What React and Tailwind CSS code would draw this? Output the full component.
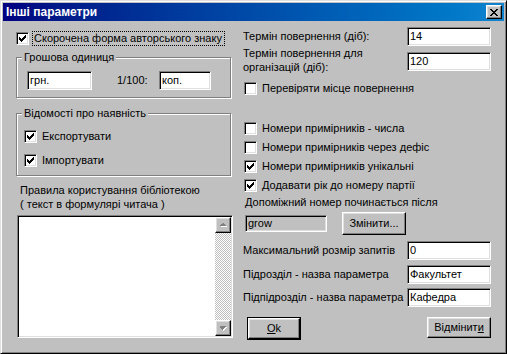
import React from "react";

const sunken =
  "border border-t-[#808080] border-l-[#808080] border-b-white border-r-white shadow-[inset_1px_1px_0_#000,inset_-1px_-1px_0_#dfdfdf]";
const raised =
  "border border-t-white border-l-white border-b-black border-r-black shadow-[inset_-1px_-1px_0_#808080,inset_1px_1px_0_#dfdfdf] bg-[#c0c0c0]";

function Check({ checked }) {
  return (
    <div className={`w-[13px] h-[13px] shrink-0 bg-white ${sunken}`}>
      {checked && (
        <svg width="11" height="11" viewBox="0 0 11 11" className="block">
          <path
            d="M8 2h1v1h-1z M7 3h2v1h-2z M2 4h1v1h-1z M6 4h3v1h-3z M2 5h2v1h-2z M5 5h3v1h-3z M2 6h5v1h-5z M3 7h3v1h-3z M4 8h1v1h-1z"
            fill="#000"
          />
        </svg>
      )}
    </div>
  );
}

function Field({ value, className = "", gray }) {
  return (
    <div
      className={`${sunken} ${gray ? "bg-[#c0c0c0]" : "bg-white"} flex items-center pl-[2px] shrink-0 overflow-hidden whitespace-nowrap ${className}`}
    >
      {value}
    </div>
  );
}

function CbRow({ checked, label, className = "" }) {
  return (
    <div className={`flex items-center h-[13px] ml-[1px] ${className}`}>
      <Check checked={checked} />
      <span className="ml-[5px] whitespace-nowrap">{label}</span>
    </div>
  );
}

function Group({ title, className = "", children }) {
  return (
    <div
      className={`relative w-[215px] border border-[#808080] shadow-[inset_1px_1px_0_#fff,1px_1px_0_#fff] ${className}`}
    >
      <span className="absolute -top-[7px] left-[5px] px-[2px] bg-[#c0c0c0] leading-[13px] whitespace-nowrap">
        {title}
      </span>
      {children}
    </div>
  );
}

function Arrow({ up }) {
  return (
    <div className={`w-[16px] h-[16px] ${raised} flex items-center justify-center`}>
      <svg width="7" height="5" viewBox="0 0 7 5" className="block">
        {up ? (
          <>
            <path d="M4 1h1v1h1v1h1v1h-6v-1h1v-1h1z" fill="#fff" />
            <path d="M3 0h1v1h1v1h1v1h-6v-1h1v-1h1z" fill="#808080" />
          </>
        ) : (
          <>
            <path d="M1 1h6v1h-1v1h-1v1h-1v1h-1v-1h-1v-1h-1z" fill="#fff" />
            <path d="M0 0h6v1h-1v1h-1v1h-1v1h-1v-1h-1v-1h-1z" fill="#808080" />
          </>
        )}
      </svg>
    </div>
  );
}

export default function App() {
  return (
    <div className="w-[507px] h-[354px] bg-[#c0c0c0] text-[11px] leading-[13px] text-black font-['Liberation_Sans',Arial,sans-serif]">
      <div className="w-full h-full border border-t-[#dfdfdf] border-l-[#dfdfdf] border-b-black border-r-black shadow-[inset_1px_1px_0_#fff,inset_-1px_-1px_0_#808080] p-[2px] flex flex-col">
        {/* Title bar */}
        <div className="h-[18px] shrink-0 bg-linear-to-r from-[#000080] to-[#1084d0] flex items-center justify-between pl-[3px] pr-[2px]">
          <span className="text-white font-bold text-[12px] leading-[14px]">Інші параметри</span>
          <div className={`w-[16px] h-[14px] ${raised} flex items-center justify-center`}>
            <svg width="8" height="7" viewBox="0 0 8 7" className="block">
              <path
                d="M0 0h2v1h1v1h2v-1h1v-1h2v1h-1v1h-1v1h-1v1h1v1h1v1h1v1h-2v-1h-1v-1h-2v1h-1v1h-2v-1h1v-1h1v-1h1v-1h-1v-1h-1v-1h-1z"
                fill="#000"
              />
            </svg>
          </div>
        </div>

        {/* Content */}
        <div className="flex flex-1">
          {/* Left column */}
          <div className="ml-[13px] w-[217px] flex flex-col">
            <div className="mt-[10px] h-[15px] flex items-center">
              <Check checked />
              <div className="ml-[3px] h-[15px] w-[193px] border border-dotted border-black flex items-center pl-[1px] whitespace-nowrap">
                Скорочена форма авторського знаку
              </div>
            </div>

            <Group title="Грошова одиниця" className="mt-[11px] h-[41px]">
              <div className="flex items-center pt-[13px] pl-[10px]">
                <Field value="грн." className="w-[65px] h-[19px]" />
                <span className="ml-[25px] w-[42px]">1/100:</span>
                <Field value="коп." className="w-[52px] h-[19px]" />
              </div>
            </Group>

            <Group title="Відомості про наявність" className="mt-[15px] h-[63px]">
              <div className="flex flex-col pt-[16px] pl-[6px]">
                <CbRow checked label="Експортувати" />
                <CbRow checked label="Імпортувати" className="mt-[11px]" />
              </div>
            </Group>

            <div className="mt-[7px] ml-[4px] leading-[14px] whitespace-nowrap">
              <div>Правила користування бібліотекою</div>
              <div>( текст в формулярі читача )</div>
            </div>

            <div className={`mt-[4px] ml-[1px] w-[216px] h-[123px] bg-white ${sunken} flex justify-end p-[1px]`}>
              <div className="w-[16px] h-full flex flex-col">
                <Arrow up />
                <div className="flex-1 bg-[image:repeating-conic-gradient(#fff_0_25%,#c0c0c0_0_50%)] bg-[length:2px_2px]" />
                <Arrow />
              </div>
            </div>
          </div>

          {/* Right column */}
          <div className="ml-[10px] w-[248px] flex flex-col">
            <div className="mt-[6px] h-[19px] flex items-center justify-between">
              <span className="whitespace-nowrap">Термін повернення (діб):</span>
              <Field value="14" className="w-[84px] h-[19px]" />
            </div>
            <div className="h-[28px] flex items-start justify-between">
              <div className="leading-[14px] whitespace-nowrap">
                <div>Термін повернення для</div>
                <div>організацій (діб):</div>
              </div>
              <Field value="120" className="mt-[6px] w-[84px] h-[19px]" />
            </div>

            <CbRow label="Перевіряти місце повернення" className="mt-[8px]" />

            <CbRow label="Номери примірників - числа" className="mt-[27px]" />
            <CbRow label="Номери примірників через дефіс" className="mt-[6px]" />
            <CbRow checked label="Номери примірників унікальні" className="mt-[6px]" />
            <CbRow checked label="Додавати рік до номеру партії" className="mt-[6px]" />

            <div className="mt-[3px] ml-[2px] leading-[14px] whitespace-nowrap">
              Допоміжний номер починається після
            </div>

            <div className="mt-[3px] h-[23px] flex items-center">
              <Field value="grow" gray className="ml-[2px] w-[82px] h-[17px]" />
              <div className={`ml-[15px] w-[64px] h-[23px] ${raised} flex items-center justify-center`}>
                Змінити...
              </div>
            </div>

            <div className="mt-[6px] h-[19px] flex items-center justify-between">
              <span className="whitespace-nowrap">Максимальний розмір запитів</span>
              <Field value="0" className="w-[84px] h-[19px]" />
            </div>
            <div className="mt-[5px] h-[19px] flex items-center justify-between">
              <span className="whitespace-nowrap">Підрозділ - назва параметра</span>
              <Field value="Факультет" className="w-[84px] h-[19px]" />
            </div>
            <div className="mt-[4px] h-[19px] flex items-center justify-between">
              <span className="whitespace-nowrap">Підпідрозділ - назва параметра</span>
              <Field value="Кафедра" className="w-[84px] h-[19px]" />
            </div>

            <div className="mt-[10px] h-[23px] flex items-start">
              <div className="ml-[4px] w-[59px] h-[23px] border border-black">
                <div className={`w-full h-full ${raised} flex items-center justify-center`}>
                  <span>
                    <span className="underline">O</span>k
                  </span>
                </div>
              </div>
              <div className={`ml-[126px] w-[64px] h-[21px] shrink-0 ${raised} flex items-center justify-center`}>
                <span>
                  Відмінит<span className="underline">и</span>
                </span>
              </div>
            </div>
          </div>
        </div>
      </div>
    </div>
  );
}
